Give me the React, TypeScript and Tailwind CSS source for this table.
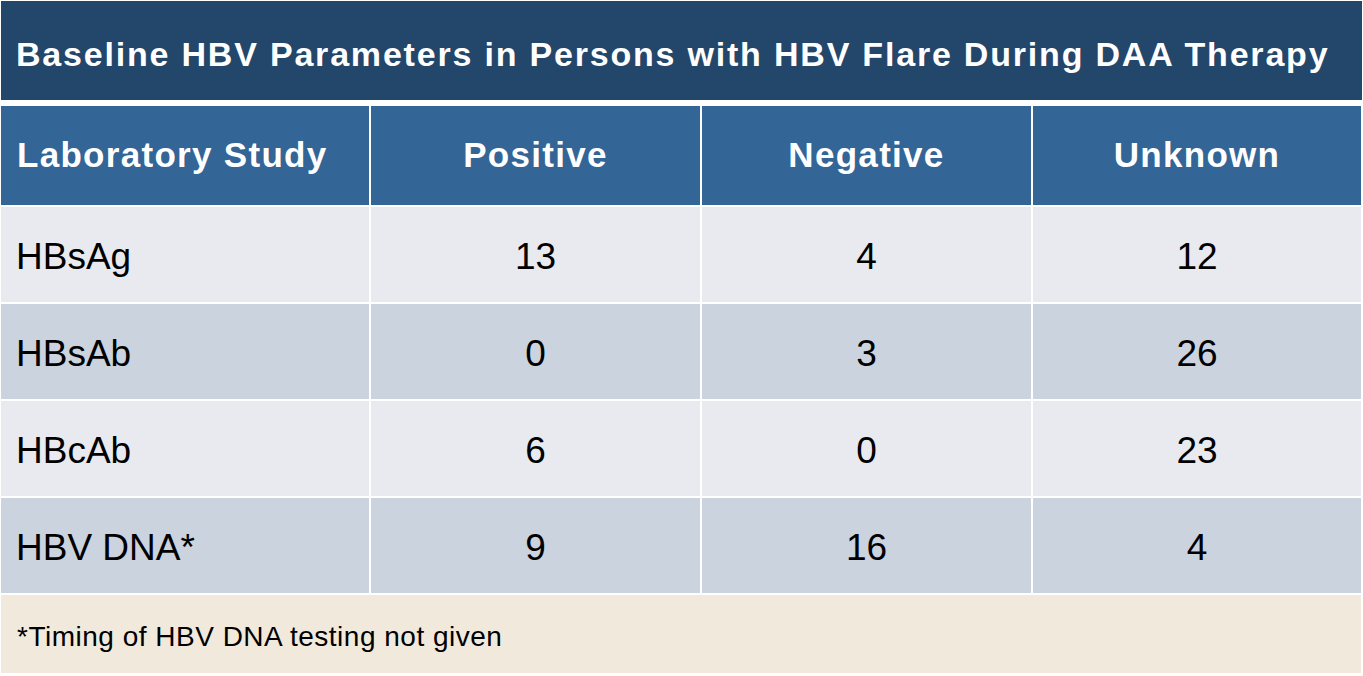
const rows = [
  { study: "HBsAg", positive: "13", negative: "4", unknown: "12", bg: "bg-[#e8eaef]" },
  { study: "HBsAb", positive: "0", negative: "3", unknown: "26", bg: "bg-[#cbd3de]" },
  { study: "HBcAb", positive: "6", negative: "0", unknown: "23", bg: "bg-[#e8eaef]" },
  { study: "HBV DNA*", positive: "9", negative: "16", unknown: "4", bg: "bg-[#cbd3de]" },
];

export default function App() {
  return (
    <div className="w-[1363px] h-[676px] bg-white p-[1px] font-['Liberation_Sans',Arial,sans-serif]">
      {/* Title */}
      <div className="h-[99px] bg-[#23466b] flex items-center px-[15px] pt-[7px]">
        <h1 className="text-white font-bold text-[34px] tracking-[1.8px] leading-none whitespace-nowrap">
          Baseline HBV Parameters in Persons with HBV Flare During DAA Therapy
        </h1>
      </div>

      {/* Table */}
      <div className="mt-[6px] grid grid-cols-[368px_329px_329px_328px] grid-rows-[99px_95px_95px_95px_95px_78px] gap-[2px]">
        <div className="bg-[#336597] flex items-center px-[16px] text-white font-bold text-[35px] tracking-[1.3px]">
          Laboratory Study
        </div>
        <div className="bg-[#336597] flex items-center justify-center text-white font-bold text-[35px] tracking-[1.3px]">
          Positive
        </div>
        <div className="bg-[#336597] flex items-center justify-center text-white font-bold text-[35px] tracking-[1.3px]">
          Negative
        </div>
        <div className="bg-[#336597] flex items-center justify-center text-white font-bold text-[35px] tracking-[1.3px]">
          Unknown
        </div>

        {rows.map((r) => (
          <div key={r.study} className="contents">
            <div className={`${r.bg} flex items-center px-[15px] pt-[4px] text-black text-[37px]`}>{r.study}</div>
            <div className={`${r.bg} flex items-center justify-center pt-[4px] text-black text-[37px]`}>{r.positive}</div>
            <div className={`${r.bg} flex items-center justify-center pt-[4px] text-black text-[37px]`}>{r.negative}</div>
            <div className={`${r.bg} flex items-center justify-center pt-[4px] text-black text-[37px]`}>{r.unknown}</div>
          </div>
        ))}

        <div className="col-span-4 bg-[#f0e9dc] flex items-center px-[16px] pt-[6px] text-black text-[28px] tracking-[0.5px]">
          *Timing of HBV DNA testing not given
        </div>
      </div>
    </div>
  );
}
